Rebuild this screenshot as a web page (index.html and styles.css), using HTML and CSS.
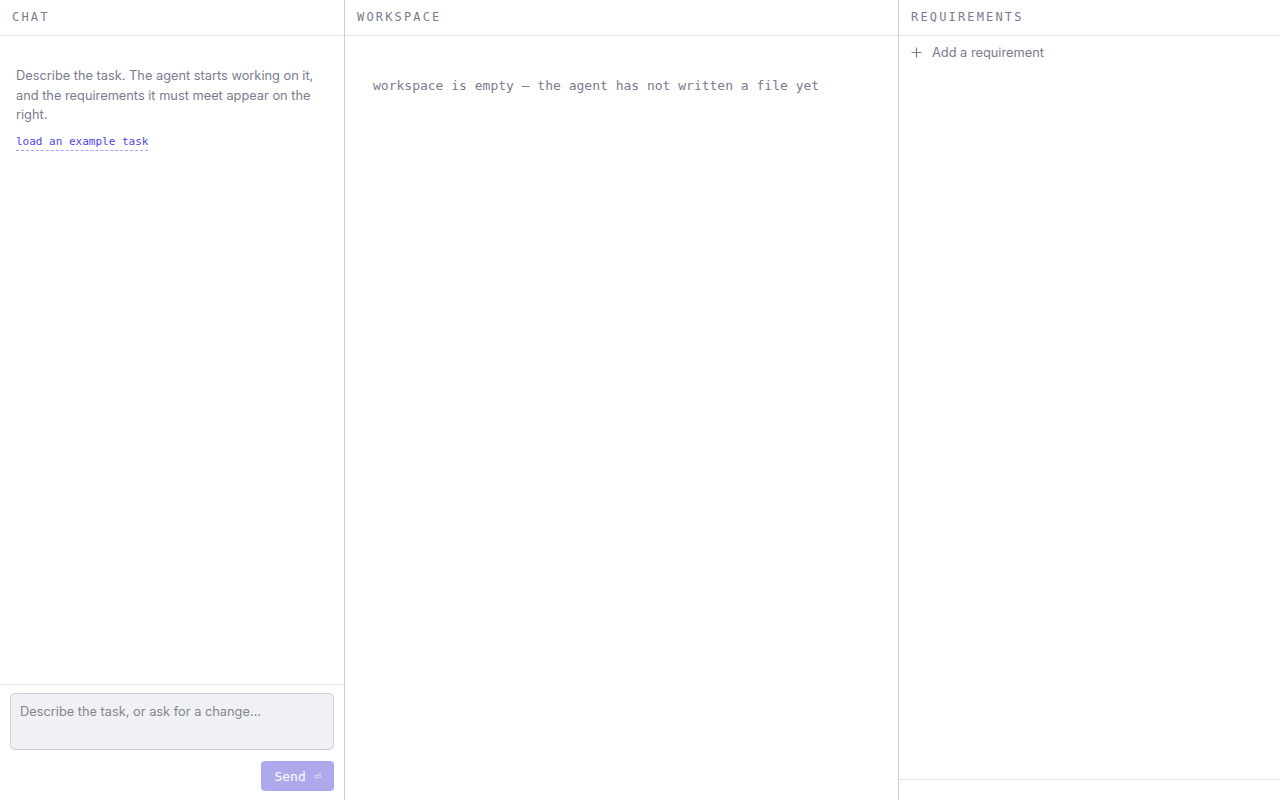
FILE: index.html
```html
<!DOCTYPE html>
<html lang="en">

<head>
    <meta charset="UTF-8">
    <title>Agent Workspace</title>
    <link rel="stylesheet" href="styles.css">
</head>

<body>
    <div class="layout">
        <section class="pane chat">
            <div class="pane-header">Chat</div>
            <div class="chat-log">
                <p class="intro">Describe the task. The agent starts working on it, and the requirements it must meet appear on the right.</p>
                <a class="example-link" href="#">load an example task</a>
            </div>
            <form class="composer">
                <textarea class="composer-input" placeholder="Describe the task, or ask for a change…"></textarea>
                <div class="composer-actions">
                    <button class="send-btn" type="submit" disabled>Send<span class="enter-key">⏎</span></button>
                </div>
            </form>
        </section>
        <section class="pane workspace">
            <div class="pane-header">Workspace</div>
            <div class="workspace-body">
                <div class="empty-note">workspace is empty — the agent has not written a file yet</div>
            </div>
        </section>
        <section class="pane requirements">
            <div class="pane-header">Requirements</div>
            <div class="req-list">
                <button class="add-req" type="button">
                    <svg class="plus" width="11" height="11" viewBox="0 0 11 11">
                        <path d="M5.5 0.5v10M0.5 5.5h10" stroke="currentColor" stroke-width="1.2" fill="none" />
                    </svg>
                    Add a requirement
                </button>
            </div>
            <div class="req-footer"></div>
        </section>
    </div>
</body>

</html>
```

FILE: styles.css
```css
* {
    box-sizing: border-box;
}

html,
body {
    height: 100%;
}

body {
    margin: 0;
    font-family: Inter, 'Noto Sans', sans-serif;
    font-size: 12.8px;
    color: #7b7b8f;
    background: #fff;
}

.layout {
    display: grid;
    grid-template-columns: 345px 554px 1fr;
    height: 100vh;
}

.pane {
    display: flex;
    flex-direction: column;
    min-height: 0;
    border-right: 1px solid #cfcddc;
}

.pane:last-child {
    border-right: none;
}

.pane-header {
    height: 36px;
    flex: none;
    padding: 0 12px 2px;
    display: flex;
    align-items: center;
    border-bottom: 1px solid #e2e2ea;
    font-family: 'DejaVu Sans Mono', monospace;
    font-size: 12px;
    letter-spacing: 0.18em;
    text-transform: uppercase;
    color: #7b7b8f;
}

/* chat column */
.chat-log {
    flex: 1;
    padding: 30px 16px 16px;
}

.intro {
    margin: 0 0 8px;
    line-height: 19.5px;
    color: #7b7b8f;
}

.example-link {
    font-family: 'DejaVu Sans Mono', monospace;
    font-size: 11px;
    color: #4f46e5;
    text-decoration: none;
    border-bottom: 1px dashed #a5a0f0;
    padding-bottom: 2px;
}

.composer {
    flex: none;
    border-top: 1px solid #e2e2ea;
    padding: 8px 10px 9px;
}

.composer-input {
    display: block;
    width: 100%;
    height: 57px;
    resize: none;
    padding: 9px 9px 8px;
    border: 1px solid #cdcdd8;
    border-radius: 5px;
    background: #f0f1f5;
    font-family: Inter, 'Noto Sans', sans-serif;
    font-size: 12.8px;
    line-height: 18px;
    color: #3a3a4a;
}

.composer-input::placeholder {
    color: #85858f;
}

.composer-actions {
    display: flex;
    justify-content: flex-end;
    margin-top: 11px;
}

.send-btn {
    display: flex;
    align-items: center;
    height: 30px;
    padding: 0 13px;
    border: none;
    border-radius: 4px;
    background: #adaaeb;
    color: #fff;
    font-family: 'DejaVu Sans Mono', monospace;
    font-size: 13px;
}

.enter-key {
    font-size: 12px;
    margin-left: 8px;
    opacity: 0.8;
}

/* workspace column */
.workspace-body {
    flex: 1;
    padding: 40px 28px;
}

.empty-note {
    font-family: 'DejaVu Sans Mono', monospace;
    font-size: 13px;
    line-height: 20px;
    color: #7b7b8f;
}

/* requirements column */
.req-list {
    flex: 1;
}

.add-req {
    display: flex;
    align-items: center;
    height: 32px;
    padding: 0 12px;
    border: none;
    background: none;
    font-family: Inter, 'Noto Sans', sans-serif;
    font-size: 12.8px;
    color: #7b7b8f;
}

.plus {
    margin-right: 10px;
}

.req-footer {
    height: 21px;
    flex: none;
    border-top: 1px solid #e2e2ea;
}
```
